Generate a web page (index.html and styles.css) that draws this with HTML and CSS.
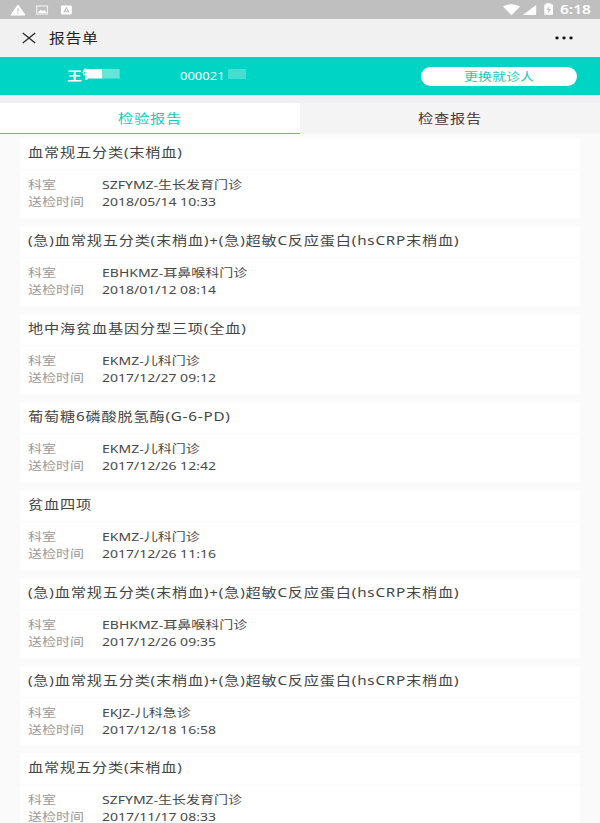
FILE: index.html
```html
<!DOCTYPE html>
<html lang="zh-CN">
<head>
<meta charset="utf-8">
<title>报告单</title>
<link rel="stylesheet" href="styles.css">
</head>
<body>
<div class="status">
  <svg class="status-left" width="80" height="19" viewBox="0 0 80 19">
    <path d="M18 5L25 15H11Z" fill="#fff" stroke="#fff" stroke-width="1" stroke-linejoin="round"/>
    <path d="M18 8.2V11.6M18 12.6V13.8" stroke="#c0c0c0" stroke-width="1.2"/>
    <rect x="36.7" y="6" width="10.8" height="8" fill="none" stroke="#eee" stroke-width="1.2"/>
    <path d="M38 12.5L40.5 9.8L42.5 11.3L44.3 10L46.5 12.5V13H38Z" fill="#fff"/>
    <rect x="61" y="5.5" width="10.8" height="9" rx="1" fill="#fff"/>
    <path d="M63.8 12.6L66.4 7.8L69 12.6M64.8 11.2H68" fill="none" stroke="#bbb" stroke-width="1.1"/>
  </svg>
  <svg class="status-right" width="56" height="19" viewBox="0 0 56 19">
    <path d="M3 6.6Q11.5 1.8 20 6.6L11.5 15.2Z" fill="#fff"/>
    <path d="M36.2 5V15H22.8Z" fill="#fff"/>
    <path d="M44.3 4.6H46.3V3.3H50.8V4.6H53V14.8H44.3Z" fill="#fff"/>
    <path d="M49.8 5.8L46.4 10H48.5L47.6 13.4L51 9.2H48.8Z" fill="#bbb"/>
  </svg>
  <span class="clock">6:18</span>
</div>
<header class="nav">
  <svg width="14" height="12" viewBox="0 0 14 12"><path d="M.8 1L13.2 11M13.2 1L.8 11" stroke="#2b2b2b" stroke-width="1.35" fill="none"/></svg>
  <h1 class="nav-title">报告单</h1>
  <svg class="more" width="18" height="4" viewBox="0 0 18 4"><g fill="#111"><ellipse cx="2" cy="2" rx="1.7" ry="1.4"/><ellipse cx="9" cy="2" rx="1.7" ry="1.4"/><ellipse cx="16" cy="2" rx="1.7" ry="1.4"/></g></svg>
</header>
<section class="patient">
  <span class="name">王</span>
  <svg class="mask" width="38" height="12" viewBox="0 0 38 12">
    <path d="M3.5 .5L.8 5M2 3.3H7M1.2 6.5H6M4 4V11.3L6 10.3" fill="none" stroke="#fff" stroke-width="1.5"/>
    <path d="M4 1H20V10.5H5Z" fill="#fff"/>
    <rect x="20" y="1" width="17.7" height="9.5" fill="#66e6da"/>
  </svg>
  <span class="number">000021</span>
  <span class="number-mask"></span>
  <button class="switch"><span>更换就诊人</span></button>
</section>
<nav class="tabs">
  <div class="tab active"><span>检验报告</span></div>
  <div class="tab"><span>检查报告</span></div>
</nav>
<main class="list">
  <article class="card"><h2><span>血常规五分类(末梢血)</span></h2><dl><dt>科室</dt><dd>SZFYMZ-生长发育门诊</dd><dt>送检时间</dt><dd>2018/05/14 10:33</dd></dl></article>
  <article class="card"><h2><span>(急)血常规五分类(末梢血)+(急)超敏C反应蛋白(hsCRP末梢血)</span></h2><dl><dt>科室</dt><dd>EBHKMZ-耳鼻喉科门诊</dd><dt>送检时间</dt><dd>2018/01/12 08:14</dd></dl></article>
  <article class="card"><h2><span>地中海贫血基因分型三项(全血)</span></h2><dl><dt>科室</dt><dd>EKMZ-儿科门诊</dd><dt>送检时间</dt><dd>2017/12/27 09:12</dd></dl></article>
  <article class="card"><h2><span>葡萄糖6磷酸脱氢酶(G-6-PD)</span></h2><dl><dt>科室</dt><dd>EKMZ-儿科门诊</dd><dt>送检时间</dt><dd>2017/12/26 12:42</dd></dl></article>
  <article class="card"><h2><span>贫血四项</span></h2><dl><dt>科室</dt><dd>EKMZ-儿科门诊</dd><dt>送检时间</dt><dd>2017/12/26 11:16</dd></dl></article>
  <article class="card"><h2><span>(急)血常规五分类(末梢血)+(急)超敏C反应蛋白(hsCRP末梢血)</span></h2><dl><dt>科室</dt><dd>EBHKMZ-耳鼻喉科门诊</dd><dt>送检时间</dt><dd>2017/12/26 09:35</dd></dl></article>
  <article class="card"><h2><span>(急)血常规五分类(末梢血)+(急)超敏C反应蛋白(hsCRP末梢血)</span></h2><dl><dt>科室</dt><dd>EKJZ-儿科急诊</dd><dt>送检时间</dt><dd>2017/12/18 16:58</dd></dl></article>
  <article class="card"><h2><span>血常规五分类(末梢血)</span></h2><dl><dt>科室</dt><dd>SZFYMZ-生长发育门诊</dd><dt>送检时间</dt><dd>2017/11/17 08:33</dd></dl></article>
</main>
</body>
</html>
```
FILE: styles.css
```css
* { box-sizing: border-box; }
body {
  margin: 0;
  height: 823px;
  overflow: hidden;
  background: #fafafa;
  color: #444;
  font-family: "Noto Sans", "Noto Sans CJK SC", sans-serif;
}
h1, h2, dl, dd { margin: 0; font-weight: 400; }
svg { display: block; flex: none; }

/* Wide, flattened lettering */
.clock, .nav-title, .name, .number, .switch span, .tab span, h2 span, dt, dd {
  display: block;
  white-space: nowrap;
  transform: scaleY(.83);
}

.status {
  display: flex;
  align-items: center;
  height: 19px;
  background: #bfbfbf;
}
.status-right { margin-left: auto; }
.clock {
  width: 44px;
  padding-left: 4px;
  color: #fff;
  font: 600 15.5px/19px "Noto Sans", sans-serif;
}

.nav {
  display: flex;
  align-items: center;
  height: 38px;
  padding: 0 27px 0 22px;
  background: #f1f1f1;
}
.nav-title {
  margin-left: 13px;
  color: #222;
  font-size: 15.8px;
  letter-spacing: .7px;
  line-height: 38px;
}
.more { margin-left: auto; }

.patient {
  display: flex;
  align-items: center;
  height: 38px;
  padding: 0 23px 0 67px;
  background: #00d4c4;
  color: #fff;
}
.name { width: 15px; font-size: 15px; font-weight: 700; line-height: 38px; }
.mask { margin-top: -4px; }
.number { width: 48px; margin-left: 60px; font-size: 13px; line-height: 37px; }
.number-mask { width: 18px; height: 10px; margin-top: -4px; background: #45dfd2; }
.switch {
  width: 156px;
  height: 19px;
  margin: 0 0 0 auto;
  padding: 0;
  border: 0;
  border-radius: 10px;
  background: #fff;
  color: #16cbbb;
  font: 400 14px/18px "Noto Sans CJK SC", sans-serif;
}

.tabs {
  display: grid;
  grid-template-columns: 1fr 1fr;
  height: 39px;
  border-top: 8px solid #f0eff4;
}
.tab {
  background: #f4f4f4;
  color: #4c3638;
  font-size: 15.2px;
  letter-spacing: .8px;
  line-height: 30px;
  text-align: center;
}
.tab.active {
  background: #fff;
  color: #0ccfbf;
  border-bottom: 1px solid #1fd2c6;
}

.list {
  display: grid;
  gap: 8px;
  padding: 4px 20px 0;
}
.card {
  height: 79.93px;
  background: #fff;
}
h2 {
  height: 32px;
  padding-left: 8px;
  border-bottom: 1px solid #fbfbfb;
  color: #444;
  font-size: 15.2px;
  letter-spacing: .8px;
  line-height: 29px;
}
dl {
  display: grid;
  grid-template-columns: 74px 1fr;
  grid-auto-rows: 17px;
  padding: 6px 8px 0;
  font-size: 14px;
  line-height: 17px;
}
dt { color: #999; }
dd { color: #484848; }
```
